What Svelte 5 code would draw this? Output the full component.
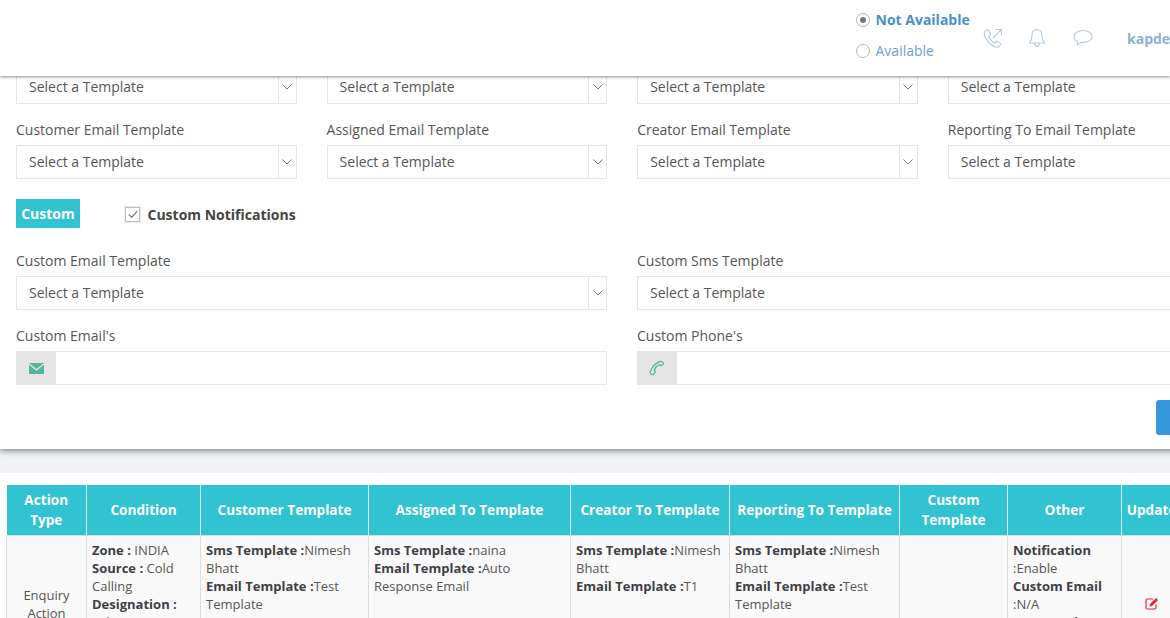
<script>
	const topRow = ['', '', '', ''];
	const emailRow = ['Customer Email Template', 'Assigned Email Template', 'Creator Email Template', 'Reporting To Email Template'];
	const colWidths = [80, 114, 168, 202, 159, 170, 108, 114, 60];
	const headers = ['Action Type', 'Condition', 'Customer Template', 'Assigned To Template', 'Creator To Template', 'Reporting To Template', 'Custom Template', 'Other', 'Update'];
</script>

<div class="page">
	<header class="topbar">
		<div class="status">
			<label class="radio-row strong"><span class="radio on"></span>Not Available</label>
			<label class="radio-row"><span class="radio"></span>Available</label>
		</div>
		<div class="icons">
			<svg class="call" viewBox="0 0 20 20" width="20" height="20" fill="none" stroke="currentColor" stroke-width="1.1" stroke-linejoin="round" stroke-linecap="round">
				<path d="M5 1.6 2.3 3.2C.8 4.4 1 7 3 10.4c2.2 3.900 5.400 7.200 9.400 8.600 1.800.6 3.200.2 4.100-.9l1.500-2.200-4.300-3-1.800 1.800c-1 .2-2.200-.4-3.800-2.300C6.500 10.500 5.700 9 5.800 7.800l1.900-1.700L5 1.600Z"></path>
				<path d="M10.500 9.500 18.500 1.500M13 1.500h5.500V7"></path>
			</svg>
			<svg class="bell" viewBox="0 0 18 20" width="18" height="20" fill="none" stroke="currentColor" stroke-width="1.1" stroke-linejoin="round">
				<path d="M9 1.500c-3.300 0-5 2.500-5 5.500 0 3.500-.8 5.800-2.600 8h15.200c-1.800-2.200-2.600-4.500-2.600-8 0-3-1.700-5.500-5-5.500Z"></path>
				<path d="M6.800 15.200c0 2.200 1 3.300 2.200 3.300s2.200-1.100 2.200-3.300"></path>
			</svg>
			<svg class="bubble" viewBox="0 0 20 18" width="20" height="18" fill="none" stroke="currentColor" stroke-width="1.1" stroke-linejoin="round">
				<path d="M10 1.500C4.800 1.500 1 4.200 1 7.500c0 2.100 1.400 3.900 3.700 5l-.4 3.600 4-2.800c.6.100 1.100.1 1.700.1 5.200 0 9-2.500 9-5.900S15.200 1.500 10 1.500Z"></path>
			</svg>
		</div>
		<span class="user">kapde</span>
	</header>

	<section class="form-card">
		<div class="grid four">
			{#each topRow as label}
				<div class="field no-label">{label}
					<div class="select"><span>Select a Template</span><i class="caret"><svg viewBox="0 0 10 6" width="10" height="6" fill="none" stroke="#777" stroke-width="1"><path d="M.5.5 5 5 9.500.5"></path></svg></i></div>
				</div>
			{/each}
			{#each emailRow as label}
				<div class="field">
					<div class="label">{label}</div>
					<div class="select"><span>Select a Template</span><i class="caret"><svg viewBox="0 0 10 6" width="10" height="6" fill="none" stroke="#777" stroke-width="1"><path d="M.5.5 5 5 9.500.5"></path></svg></i></div>
				</div>
			{/each}
		</div>

		<div class="custom-row">
			<span class="badge">Custom</span>
			<label class="check">
				<span class="box"><svg viewBox="0 0 12 10" width="10" height="9" fill="none" stroke="#777" stroke-width="1.500"><path d="M1 5l3.500 3.500L11 1"></path></svg></span>
				Custom Notifications
			</label>
		</div>

		<div class="grid two">
			<div class="field">
				<div class="label">Custom Email Template</div>
				<div class="select"><span>Select a Template</span><i class="caret"><svg viewBox="0 0 10 6" width="10" height="6" fill="none" stroke="#777" stroke-width="1"><path d="M.5.5 5 5 9.500.5"></path></svg></i></div>
			</div>
			<div class="field">
				<div class="label">Custom Sms Template</div>
				<div class="select"><span>Select a Template</span><i class="caret"><svg viewBox="0 0 10 6" width="10" height="6" fill="none" stroke="#777" stroke-width="1"><path d="M.5.5 5 5 9.500.5"></path></svg></i></div>
			</div>
			<div class="field">
				<div class="label">Custom Email's</div>
				<div class="input">
					<span class="addon"><svg viewBox="0 0 15 11" width="15" height="11"><path fill="#52b59c" d="M0 0h15L7.500 6 0 0Z"></path><path fill="#52b59c" d="M0 1.800 7.500 7.800 15 1.800V11H0V1.800Z"></path></svg></span>
				</div>
			</div>
			<div class="field">
				<div class="label">Custom Phone's</div>
				<div class="input">
					<span class="addon"><svg viewBox="0 0 16 16" width="16" height="16" fill="none" stroke="#58b5a2" stroke-width="1.300"><path d="M1.500 13.500c-.6-.8-.5-1.700 0-2.600C3 7.500 6 3.500 10 1.800c1.200-.5 2.300-.5 3 0 .8.500 1.500 1.500 1.500 2.200l-2.700 1.800-1.700-1.300C8 5.700 6 8 5.200 10.200l1.300 1.500L4 14.600c-1 .2-1.900-.3-2.500-1.100Z"></path></svg></span>
				</div>
			</div>
		</div>

		<div class="actions"><button class="save">Update</button></div>
	</section>

	<section class="table-card">
		<table>
			<colgroup>
				{#each colWidths as w}<col style="width:{w}px" />{/each}
			</colgroup>
			<thead>
				<tr>
					{#each headers as h}<th>{h}</th>{/each}
				</tr>
			</thead>
			<tbody>
				<tr>
					<td class="center">Enquiry Action</td>
					<td><b>Zone :</b> INDIA<br /><b>Source :</b> Cold Calling<br /><b>Designation :</b> Sales</td>
					<td><b>Sms Template :</b>Nimesh Bhatt<br /><b>Email Template :</b>Test Template</td>
					<td><b>Sms Template :</b>naina<br /><b>Email Template :</b>Auto Response Email</td>
					<td><b>Sms Template :</b>Nimesh Bhatt<br /><b>Email Template :</b>T1</td>
					<td><b>Sms Template :</b>Nimesh Bhatt<br /><b>Email Template :</b>Test Template</td>
					<td></td>
					<td><b>Notification</b> :Enable<br /><b>Custom Email</b> :N/A<br /><b>Custom Phone</b> :N/A</td>
					<td class="center">
						<svg class="edit" viewBox="0 0 14 13" width="14" height="13" fill="none" stroke="#e8203a" stroke-width="1.200"><path d="M11 7.500V10.500a1.500 1.500 0 0 1-1.500 1.500H2.500A1.500 1.500 0 0 1 1 10.500V3.500A1.500 1.500 0 0 1 2.500 2H8"></path><path fill="#e8203a" stroke="none" d="M4.500 9.500 5 7l6-6 2 2-6 6-2.500.5Z"></path></svg>
					</td>
				</tr>
			</tbody>
		</table>
	</section>
</div>

<style>
	:global(body) {
		margin: 0;
		background: #f0f2f5;
	}

	.page {
		position: relative;
		width: 1170px;
		height: 618px;
		overflow: hidden;
		font-family: 'Open Sans', sans-serif;
		font-size: 14px;
		color: #555;
		background: #f0f2f5;
	}

	.topbar {
		position: absolute;
		top: 0;
		left: 0;
		width: 1170px;
		height: 76px;
		background: #fff;
		box-shadow: 0 1px 3px rgba(0, 0, 0, 0.45);
		z-index: 5;
		display: flex;
		align-items: flex-start;
		box-sizing: border-box;
		padding-left: 856px;
		white-space: nowrap;
	}

	.status {
		width: 124px;
		padding-top: 8px;
		flex: none;
	}

	.radio-row {
		display: flex;
		align-items: center;
		gap: 5.5px;
		height: 22px;
		margin-bottom: 9px;
		color: #6c9fcb;
		font-size: 14px;
	}

	.radio-row.strong {
		color: #4a90c9;
		font-weight: 700;
	}

	.radio {
		width: 12px;
		height: 12px;
		border: 1px solid #b5b5b5;
		border-radius: 50%;
		position: relative;
		flex: none;
		margin-top: 2px;
	}

	.radio.on::after {
		content: '';
		position: absolute;
		left: 3px;
		top: 3px;
		width: 6px;
		height: 6px;
		border-radius: 50%;
		background: #777;
	}

	.icons {
		display: flex;
		align-items: center;
		color: #b4cbdc;
		margin-top: 28px;
		margin-left: 3px;
		flex: none;
	}

	.bell {
		margin-left: 25px;
	}

	.bubble {
		margin-left: 27px;
	}

	.user {
		margin-left: 34px;
		margin-top: 29px;
		font-weight: 700;
		color: #8db0d2;
		line-height: 20px;
	}

	.form-card {
		background: #fff;
		width: 1229px;
		box-sizing: border-box;
		padding: 70px 0 14px 16px;
		height: 449px;
		box-shadow: 0 2px 6px rgba(0, 0, 0, 0.45);
	}

	.grid {
		display: grid;
		column-gap: 30px;
		row-gap: 16px;
	}

	.four {
		grid-template-columns: repeat(4, 280.6px);
	}

	.two {
		grid-template-columns: repeat(2, 591px);
	}

	.label {
		height: 20px;
		line-height: 20px;
		margin-bottom: 5px;
		color: #555;
		white-space: nowrap;
	}

	.select {
		display: flex;
		align-items: center;
		justify-content: space-between;
		height: 34px;
		box-sizing: border-box;
		border: 1px solid #e5e6e7;
		padding-left: 12px;
		color: #555;
	}

	.select span {
		margin-top: -2px;
	}

	.caret {
		display: flex;
		align-items: center;
		justify-content: center;
		width: 17px;
		height: 100%;
		border-left: 1px solid #e5e6e7;
	}

	.custom-row {
		display: flex;
		align-items: center;
		margin: 20px 0 23px;
		height: 29px;
	}

	.badge {
		display: block;
		width: 64px;
		height: 29px;
		line-height: 29px;
		text-align: center;
		background: #31c3d2;
		color: #fff;
		font-weight: 700;
	}

	.check {
		display: flex;
		align-items: center;
		margin-left: 45px;
		gap: 7.5px;
		font-weight: 700;
		color: #444;
		margin-top: 1px;
	}

	.box {
		display: flex;
		align-items: center;
		justify-content: center;
		width: 13px;
		height: 13px;
		border: 1px solid #bbb;
		outline: 1px solid #eee;
	}

	.input {
		height: 34px;
		box-sizing: border-box;
		border: 1px solid #e5e6e7;
		border-left: 0;
		display: flex;
	}

	.addon {
		display: flex;
		align-items: center;
		justify-content: center;
		width: 40px;
		margin: -1px 0;
		background: #e5e5e5;
		border-radius: 2px 0 0 2px;
	}

	.actions {
		display: flex;
		justify-content: flex-end;
		margin-top: 15px;
	}

	.save {
		width: 73px;
		height: 35px;
		border: 0;
		border-radius: 3px;
		background: #3498db;
		color: #fff;
		font: inherit;
		padding-left: 20px;
	}

	.table-card {
		margin-top: 24px;
		background: #fff;
		padding: 12px 0 0 6px;
		height: 200px;
		box-sizing: border-box;
	}

	table {
		border-collapse: collapse;
		table-layout: fixed;
		width: 1175px;
	}

	th {
		height: 50px;
		box-sizing: border-box;
		padding: 0 3px;
		background: #31c3d2;
		color: #fff;
		font-size: 13.6px;
		font-weight: 700;
		line-height: 20px;
		border-left: 1px solid #d9f3f6;
		border-right: 1px solid #d9f3f6;
		text-align: center;
		vertical-align: middle;
	}

	th:first-child {
		border-left: 0;
	}

	td {
		height: 138px;
		box-sizing: border-box;
		padding: 5px 5px 0;
		background: #f9f9f9;
		border: 1px solid #ddd;
		font-size: 13px;
		line-height: 18px;
		vertical-align: top;
		color: #555;
	}

	td.center {
		vertical-align: middle;
		text-align: center;
		padding-top: 0;
	}

	td b {
		color: #3f3f46;
	}

	.edit {
		display: inline-block;
		vertical-align: middle;
		margin-top: -4px;
	}
</style>
